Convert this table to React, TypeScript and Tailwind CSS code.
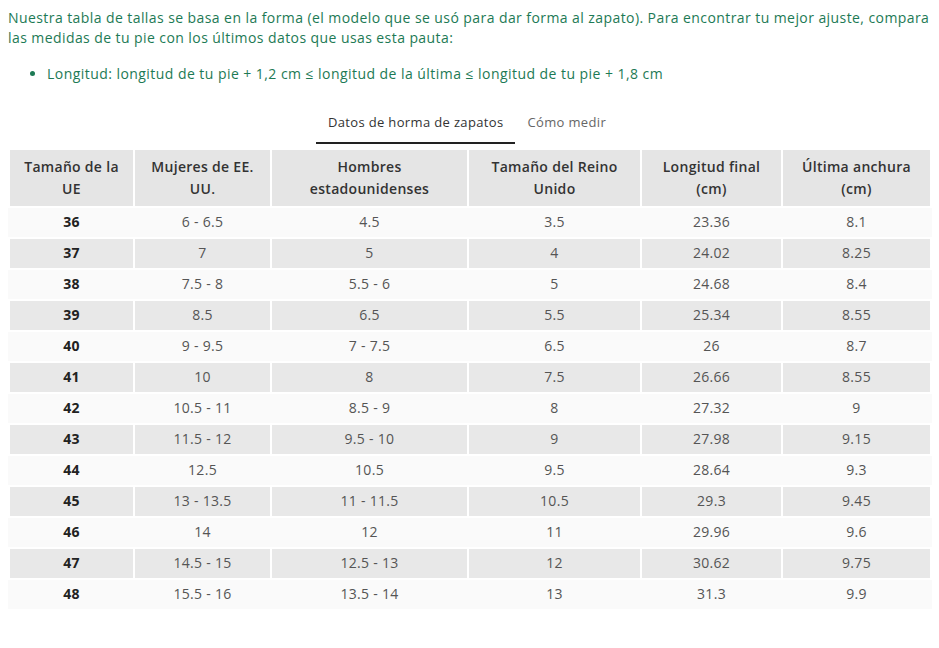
const rows = [
  ['36', '6 - 6.5', '4.5', '3.5', '23.36', '8.1'],
  ['37', '7', '5', '4', '24.02', '8.25'],
  ['38', '7.5 - 8', '5.5 - 6', '5', '24.68', '8.4'],
  ['39', '8.5', '6.5', '5.5', '25.34', '8.55'],
  ['40', '9 - 9.5', '7 - 7.5', '6.5', '26', '8.7'],
  ['41', '10', '8', '7.5', '26.66', '8.55'],
  ['42', '10.5 - 11', '8.5 - 9', '8', '27.32', '9'],
  ['43', '11.5 - 12', '9.5 - 10', '9', '27.98', '9.15'],
  ['44', '12.5', '10.5', '9.5', '28.64', '9.3'],
  ['45', '13 - 13.5', '11 - 11.5', '10.5', '29.3', '9.45'],
  ['46', '14', '12', '11', '29.96', '9.6'],
  ['47', '14.5 - 15', '12.5 - 13', '12', '30.62', '9.75'],
  ['48', '15.5 - 16', '13.5 - 14', '13', '31.3', '9.9'],
];

const headers = [
  { label: 'Tamaño de la UE', w: 'w-[125px]' },
  { label: 'Mujeres de EE. UU.', w: 'w-[137px]' },
  { label: 'Hombres estadounidenses', w: 'w-[197px]' },
  { label: 'Tamaño del Reino Unido', w: 'w-[173px]' },
  { label: 'Longitud final (cm)', w: 'w-[141px]' },
  { label: 'Última anchura (cm)', w: 'w-[149px]' },
];

export default function App() {
  return (
    <div className="min-h-screen bg-white font-['Open_Sans',sans-serif] text-[14px] pl-2 pr-[9px] pt-2">
      {/* Intro */}
      <p className="text-[#1d7a55] leading-[20px] tracking-[0.42px]">
        Nuestra tabla de tallas se basa en la forma (el modelo que se usó para dar forma al zapato). Para encontrar tu
        mejor ajuste, compara las medidas de tu pie con los últimos datos que usas esta pauta:
      </p>
      <ul className="mt-4 pl-[39px] list-disc marker:text-[#1d7a55] text-[#1d7a55] leading-[20px] tracking-[0.45px]">
        <li>Longitud: longitud de tu pie + 1,2 cm ≤ longitud de la última ≤ longitud de tu pie + 1,8 cm</li>
      </ul>

      {/* Tabs */}
      <div className="mt-[21px] flex justify-center text-[13px] tracking-[0.35px]">
        <div className="flex translate-x-[-2px]">
          <button className="px-3 pt-2 pb-[9px] border-b-2 border-[#222] text-[#333]">Datos de horma de zapatos</button>
          <button className="px-3 pt-2 pb-[9px] border-b-2 border-transparent text-[#666]">Cómo medir</button>
        </div>
      </div>

      {/* Table */}
      <table className="mt-[4px] border-collapse table-fixed text-[14px] w-[922px] tracking-[0.3px]">
        <thead>
          <tr>
            {headers.map((h) => (
              <th
                key={h.label}
                className={`${h.w} bg-[#e5e5e5] border-2 border-white font-semibold text-[#333] leading-[22px] h-[58px] px-3 text-center`}
              >
                {h.label}
              </th>
            ))}
          </tr>
        </thead>
        <tbody>
          {rows.map((r, i) => (
            <tr key={r[0]} className={i % 2 === 0 ? 'bg-[#fafafa]' : 'bg-[#e8e8e8]'}>
              {r.map((c, j) => (
                <td
                  key={j}
                  className={`border-2 border-white h-[31px] text-center leading-[20px] ${
                    j === 0 ? 'font-bold text-[#222]' : 'text-[#555]'
                  } ${i % 2 === 0 ? 'border-x-[#fafafa]' : ''}`}
                >
                  {c}
                </td>
              ))}
            </tr>
          ))}
        </tbody>
      </table>
    </div>
  );
}
